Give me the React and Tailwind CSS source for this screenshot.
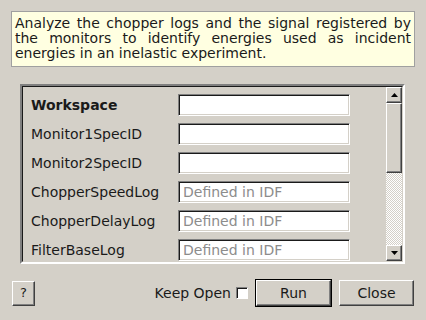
import React from 'react';

const raised =
  'border border-t-white border-l-white border-b-[#404040] border-r-[#404040] shadow-[inset_-1px_-1px_0_#808080]';

const Field = ({ label, bold, placeholder }) => (
  <div className="flex items-center h-[22px] shrink-0">
    <div className={`w-[147px] text-[14px] text-[#1a1a1a] ${bold ? 'font-bold' : ''}`}>{label}</div>
    <div className="w-[172px] h-[22px] bg-white border border-t-[#808080] border-l-[#808080] border-b-white border-r-white shadow-[inset_1px_1px_0_#1a1a1a,inset_-1px_-1px_0_#d4d0c8] flex items-center px-[4px]">
      {placeholder && <span className="text-[14px] text-[#8c8c8c]">{placeholder}</span>}
    </div>
  </div>
);

const App = () => {
  const fields = [
    { label: 'Workspace', bold: true },
    { label: 'Monitor1SpecID' },
    { label: 'Monitor2SpecID' },
    { label: 'ChopperSpeedLog', placeholder: 'Defined in IDF' },
    { label: 'ChopperDelayLog', placeholder: 'Defined in IDF' },
    { label: 'FilterBaseLog', placeholder: 'Defined in IDF' },
  ];

  return (
    <div
      className="w-[426px] h-[320px] bg-[#d4d0c8] flex flex-col overflow-hidden"
      style={{ fontFamily: '"DejaVu Sans", sans-serif' }}
    >
      <div className="mx-[11px] mt-[11px] h-[56px] bg-[#ffffe1] border border-[#a0a0a0] px-[3px] pt-[4px] text-[14px] leading-[15px] text-[#1a1a1a] text-justify [text-align-last:left]">
        Analyze the chopper logs and the signal registered by the monitors to identify energies used as incident energies in an inelastic experiment.
      </div>

      <div className="ml-[20px] mt-[17px] w-[385px] h-[180px] flex border-2 border-t-[#808080] border-l-[#808080] border-b-white border-r-white">
        <div className="flex-1 flex h-full border border-t-[#1a1a1a] border-l-[#1a1a1a] border-b-[#d4d0c8] border-r-[#d4d0c8]">
          <div className="flex-1 flex flex-col gap-[7px] pl-[8px] pt-[7px] overflow-hidden">
            {fields.map((f) => (
              <Field key={f.label} {...f} />
            ))}
          </div>
          <div className="w-[16px] flex flex-col h-full">
            <div className={`w-[16px] h-[16px] bg-[#d4d0c8] flex items-center justify-center ${raised}`}>
              <svg width="7" height="4" viewBox="0 0 7 4"><path d="M3.5 0L7 4H0z" fill="#000" /></svg>
            </div>
            <div className={`w-[16px] h-[70px] bg-[#d4d0c8] ${raised}`} />
            <div className="flex-1 bg-[repeating-conic-gradient(#d4d0c8_0_25%,#ffffff_0_50%)] bg-[length:2px_2px]" />
            <div className={`w-[16px] h-[16px] bg-[#d4d0c8] flex items-center justify-center ${raised}`}>
              <svg width="7" height="4" viewBox="0 0 7 4"><path d="M0 0H7L3.5 4z" fill="#000" /></svg>
            </div>
          </div>
        </div>
      </div>

      <div className="flex items-center mt-[15px] px-[12px]">
        <button className={`w-[23px] h-[25px] bg-[#d4d0c8] text-[13px] text-[#1a1a1a] flex items-center justify-center ${raised}`}>
          ?
        </button>
        <div className="flex-1" />
        <span className="text-[14px] text-[#1a1a1a]">Keep Open</span>
        <div className="ml-[5px] w-[12px] h-[12px] bg-white border border-t-[#808080] border-l-[#808080] border-b-white border-r-white shadow-[inset_1px_1px_0_#1a1a1a]" />
        <div className="ml-[7px] w-[77px] h-[28px] border border-black">
          <button className={`w-full h-full bg-[#d4d0c8] text-[14px] text-[#1a1a1a] flex items-center justify-center ${raised}`}>
            Run
          </button>
        </div>
        <button className={`ml-[7px] w-[75px] h-[26px] bg-[#d4d0c8] text-[14px] text-[#1a1a1a] flex items-center justify-center ${raised}`}>
          Close
        </button>
      </div>
    </div>
  );
};

export default App;
